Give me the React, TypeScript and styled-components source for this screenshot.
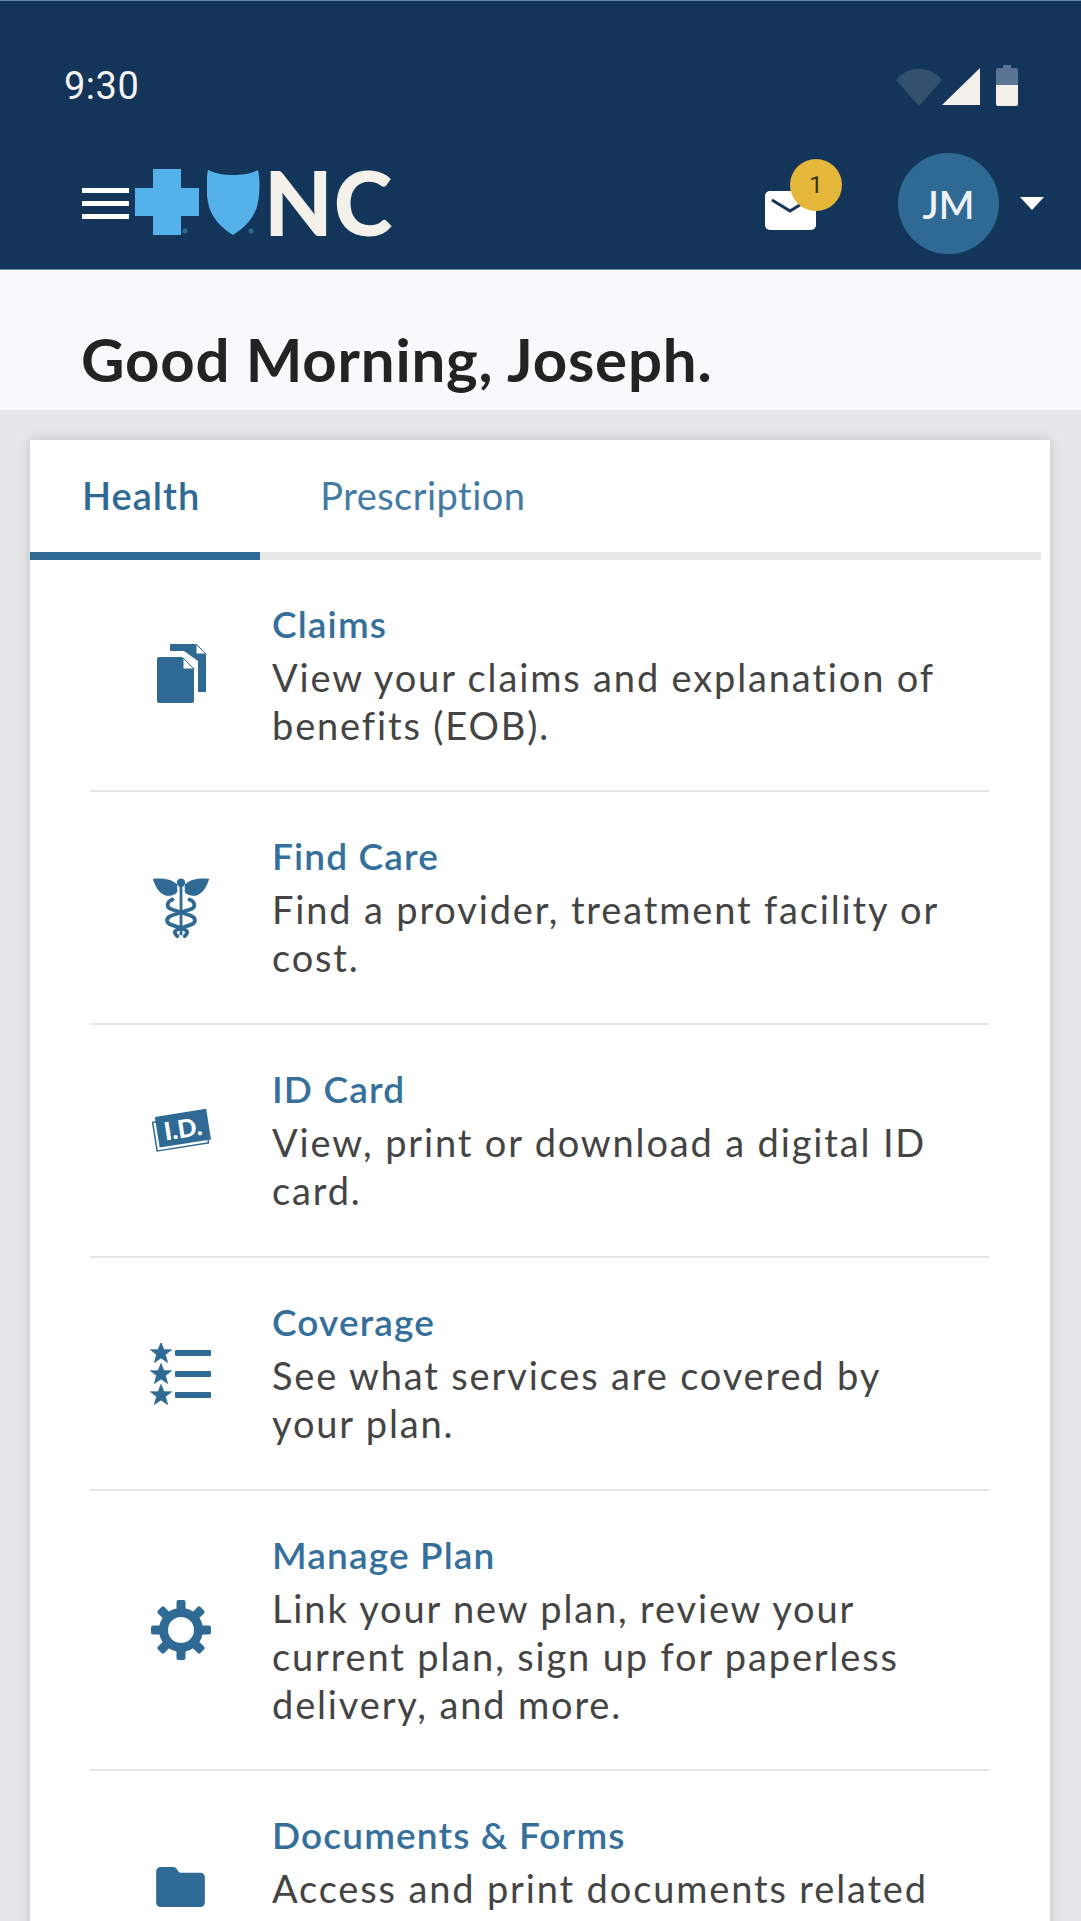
import styled, { createGlobalStyle } from "styled-components";

const GlobalStyle = createGlobalStyle`
  html, body {
    margin: 0;
    padding: 0;
    background: #e6e7e9;
  }
  * {
    box-sizing: border-box;
  }
`;

const Page = styled.div`
  width: 1081px;
  height: 1921px;
  overflow: hidden;
  display: flex;
  flex-direction: column;
  background: #e6e7e9;
  font-family: Lato, "Open Sans", sans-serif;
`;

const Header = styled.header`
  flex: none;
  height: 270px;
  display: flex;
  flex-direction: column;
  background: #14355a;
  border-top: 1px solid #5f87ab;
  border-bottom: 1px solid #6d8fae;
`;

const StatusBar = styled.div`
  height: 152px;
  flex: none;
  display: flex;
  justify-content: space-between;
  align-items: flex-start;
  padding: 64px 63px 0 64px;
`;

const Clock = styled.span`
  font-family: Roboto, sans-serif;
  font-size: 38px;
  line-height: 42px;
  color: #f5f3ef;
  letter-spacing: 0.5px;
`;

const StatusIcons = styled.div`
  display: flex;
  align-items: flex-start;
  margin-top: 3px;
`;

const NavBar = styled.nav`
  display: flex;
  align-items: center;
  height: 101px;
  padding: 0 37px 0 82px;
`;

const MenuButton = styled.button`
  width: 47px;
  height: 31px;
  margin-right: 6px;
  padding: 0;
  border: 0;
  background: transparent;
  display: flex;
  flex-direction: column;
  justify-content: space-between;
`;

const MenuBar = styled.span`
  display: block;
  height: 5px;
  background: #fff;
`;

const Logo = styled.div`
  display: flex;
  align-items: center;
  gap: 8px;
  margin-top: -3px;
`;

const LogoText = styled.span`
  margin-left: -4px;
  font-size: 89px;
  line-height: 66px;
  font-weight: 900;
  color: #f4f0ea;
  letter-spacing: 1px;
`;

const NavActions = styled.div`
  margin-left: auto;
  display: flex;
  align-items: center;
`;

const MailWrap = styled.div`
  position: relative;
  width: 51px;
  height: 39px;
  margin-right: 82px;
  margin-top: 13px;
`;

const Badge = styled.span`
  position: absolute;
  left: 25px;
  top: -32px;
  width: 52px;
  height: 52px;
  border-radius: 50%;
  background: #e5b73b;
  color: #3a3320;
  font-family: Roboto, sans-serif;
  font-size: 24px;
  display: flex;
  align-items: center;
  justify-content: center;
`;

const Avatar = styled.div`
  width: 101px;
  height: 101px;
  border-radius: 50%;
  background: #2f6a94;
  color: #eef2f5;
  font-size: 38px;
  font-weight: 600;
  display: flex;
  align-items: center;
  justify-content: center;
  margin-right: 21px;
`;

const Caret = styled.span`
  width: 0;
  height: 0;
  border-left: 12px solid transparent;
  border-right: 12px solid transparent;
  border-top: 13px solid #fff;
`;

const Greeting = styled.div`
  flex: none;
  height: 140px;
  padding: 54px 0 0 81px;
  background: #f8f9fb;
`;

const GreetingText = styled.h1`
  margin: 0;
  font-size: 60px;
  line-height: 70px;
  font-weight: 700;
  letter-spacing: 0.8px;
  color: #232323;
`;

const Main = styled.main`
  flex: 1;
  padding: 30px 31px 0 30px;
`;

const Card = styled.section`
  background: #fff;
  box-shadow: 0 0 12px rgba(0, 0, 0, 0.18);
  padding-bottom: 40px;
`;

const TabRail = styled.div`
  display: flex;
  height: 120px;
  margin-right: 9px;
  border-bottom: 8px solid #e9e9ea;
`;

const Tab = styled.div<{ $active?: boolean }>`
  height: 120px;
  padding: 32px ${(p) => (p.$active ? "60px" : "0")} 0 ${(p) => (p.$active ? "52px" : "60px")};
  font-size: 38px;
  line-height: 46px;
  letter-spacing: ${(p) => (p.$active ? "1px" : "0.45px")};
  color: ${(p) => (p.$active ? "#2f6a94" : "#447ba3")};
  font-weight: ${(p) => (p.$active ? 600 : 400)};
  border-bottom: 8px solid ${(p) => (p.$active ? "#2f6a94" : "transparent")};
`;

const List = styled.div`
  padding: 0 61px 0 60px;
`;

const Row = styled.div`
  display: flex;
  align-items: center;
  min-height: 233px;
  border-bottom: 2px solid #e6e6e7;

  &:first-child {
    min-height: 232px;
  }
`;

const IconCell = styled.div`
  flex: none;
  width: 182px;
  display: flex;
  justify-content: center;
  color: #2f6a94;
`;

const RowBody = styled.div`
  flex: 1;
  align-self: flex-start;
  padding: 34px 0 41px;
`;

const RowTitle = styled.div`
  font-size: 37px;
  line-height: 59px;
  font-weight: 600;
  letter-spacing: 1.15px;
  color: #34709b;
`;

const RowText = styled.div`
  font-size: 38px;
  line-height: 48px;
  letter-spacing: 1.85px;
  color: #444;
`;

function ClaimsIcon() {
  return (
    <svg width="60" height="70" viewBox="0 0 60 70">
      <path d="M19 4h25l11 11v37H47V21L33 11H19z" fill="#2f6a94" />
      <path d="M45 4v10h10z" fill="#fff" stroke="#2f6a94" strokeWidth="1" />
      <path d="M8 17h23l12 12v32a2 2 0 0 1-2 2H8a2 2 0 0 1-2-2V19a2 2 0 0 1 2-2z" fill="#2f6a94" />
      <path d="M32 18v11h11z" fill="#fff" stroke="#2f6a94" strokeWidth="1" />
    </svg>
  );
}

function CareIcon() {
  return (
    <svg width="60" height="60" viewBox="0 0 60 64">
      <g fill="#2f6a94">
        <path d="M0 1c9-1 20 0 26 6v8c-3 4-9 5-14 3C6 15 2 8 0 1z" />
        <path d="M60 1c-9-1-20 0-26 6v8c3 4 9 5 14 3 6-3 10-10 12-17z" />
        <rect x="28.5" y="3" width="3" height="58" />
        <circle cx="30" cy="5" r="4.5" />
      </g>
      <g fill="none" stroke="#2f6a94" strokeWidth="4" strokeLinecap="round">
        <path d="M21 23c-6 2-7 8-2 10l21 7c7 3 6 8 0 10l-14 5c-4 2-3 4 0 7" />
        <path d="M39 23c6 2 7 8 2 10L20 40c-7 3-6 8 0 10l14 5c4 2 3 4 0 7" />
      </g>
    </svg>
  );
}

function IdCardIcon() {
  return (
    <svg width="60" height="68" viewBox="0 0 60 68">
      <g transform="rotate(-9 30 22)">
        <rect x="3" y="11" width="52" height="29" fill="none" stroke="#2f6a94" strokeWidth="1.5" />
        <rect x="6" y="6" width="52" height="31" fill="#2f6a94" />
        <text x="32" y="31" textAnchor="middle" fontFamily="Lato, sans-serif" fontWeight="900" fontSize="25" fill="#fff">
          I.D.
        </text>
      </g>
    </svg>
  );
}

const starPoints = "0,-10.5 2.9,-3.2 10.5,-3.2 4.4,1.6 6.6,9.5 0,4.9 -6.6,9.5 -4.4,1.6 -10.5,-3.2 -2.9,-3.2";

function CoverageIcon() {
  return (
    <svg width="62" height="62" viewBox="0 0 62 62">
      {[10, 31, 52].map((y) => (
        <g key={y} fill="#2f6a94" stroke="#2f6a94" strokeWidth="0.8" strokeLinejoin="round">
          <polygon points={starPoints} transform={`translate(11 ${y})`} />
          <rect x="25" y={y - 3} width="36" height="6" rx="1" stroke="none" />
        </g>
      ))}
    </svg>
  );
}

function GearIcon() {
  return (
    <svg width="62" height="62" viewBox="-31 -31 62 62">
      <circle r="17.5" fill="none" stroke="#2f6a94" strokeWidth="9" />
      {[0, 45, 90, 135, 180, 225, 270, 315].map((a) => (
        <rect key={a} x="-4.5" y="-30" width="9" height="12" rx="2" fill="#2f6a94" transform={`rotate(${a})`} />
      ))}
    </svg>
  );
}

function FolderIcon() {
  return (
    <svg width="52" height="42" viewBox="0 0 52 44">
      <path
        d="M5 1h13c2 0 3 1 4 3s2 3 4 3h20c3 0 5 2 5 5v26c0 3-2 5-5 5H5c-3 0-5-2-5-5V6c0-3 2-5 5-5z"
        fill="#2f6a94"
      />
    </svg>
  );
}

const rows = [
  { title: "Claims", text: ["View your claims and explanation of", "benefits (EOB)."], icon: <ClaimsIcon /> },
  { title: "Find Care", text: ["Find a provider, treatment facility or", "cost."], icon: <CareIcon /> },
  { title: "ID Card", text: ["View, print or download a digital ID", "card."], icon: <IdCardIcon /> },
  { title: "Coverage", text: ["See what services are covered by", "your plan."], icon: <CoverageIcon /> },
  {
    title: "Manage Plan",
    text: ["Link your new plan, review your", "current plan, sign up for paperless", "delivery, and more."],
    icon: <GearIcon />,
  },
  { title: "Documents & Forms", text: ["Access and print documents related"], icon: <FolderIcon /> },
];

function App() {
  return (
    <Page>
      <GlobalStyle />
      <Header>
        <StatusBar>
          <Clock>9:30</Clock>
          <StatusIcons>
            <svg width="46" height="38" viewBox="0 0 46 38">
              <path d="M0 12C12-3 34-3 46 12L23 38z" fill="#33506f" />
            </svg>
            <svg width="38" height="37" viewBox="0 0 38 37">
              <path d="M38 0v37H0z" fill="#f4f0ea" />
            </svg>
            <svg width="22" height="41" viewBox="0 0 22 41" style={{ marginLeft: 16, marginTop: -3 }}>
              <path d="M7 0h8v3h5a2 2 0 0 1 2 2v15H0V5a2 2 0 0 1 2-2h5z" fill="#5a7493" />
              <path d="M0 20h22v19a2 2 0 0 1-2 2H2a2 2 0 0 1-2-2z" fill="#f4f0ea" />
            </svg>
          </StatusIcons>
        </StatusBar>
        <NavBar>
          <MenuButton aria-label="Menu">
            <MenuBar />
            <MenuBar />
            <MenuBar />
          </MenuButton>
          <Logo>
            <svg width="64" height="66" viewBox="0 0 64 66">
              <path d="M18 0h28v19h18v28H46v19H18V47H0V19h18z" fill="#55b1e9" />
              <circle cx="50" cy="62" r="2.5" fill="#2f6a94" />
            </svg>
            <svg width="53" height="66" viewBox="0 0 53 66">
              <path d="M1 1c8 4 17 5 25 5s18-1 25-5c2 10 2 22 0 32-2 14-13 26-25 33C14 59 3 47 1 33-1 23-1 11 1 1z" fill="#55b1e9" />
              <circle cx="44" cy="62" r="2.5" fill="#2f6a94" />
            </svg>
            <LogoText>NC</LogoText>
          </Logo>
          <NavActions>
            <MailWrap>
              <svg width="51" height="39" viewBox="0 0 51 39">
                <rect width="51" height="39" rx="5" fill="#fff" />
                <path d="M7 9l18 11 18-11" fill="none" stroke="#14355a" strokeWidth="3" />
              </svg>
              <Badge>1</Badge>
            </MailWrap>
            <Avatar>JM</Avatar>
            <Caret />
          </NavActions>
        </NavBar>
      </Header>
      <Greeting>
        <GreetingText>Good Morning, Joseph.</GreetingText>
      </Greeting>
      <Main>
        <Card>
          <TabRail>
            <Tab $active>Health</Tab>
            <Tab>Prescription</Tab>
          </TabRail>
          <List>
            {rows.map((row) => (
              <Row key={row.title}>
                <IconCell>{row.icon}</IconCell>
                <RowBody>
                  <RowTitle>{row.title}</RowTitle>
                  {row.text.map((line) => (
                    <RowText key={line}>{line}</RowText>
                  ))}
                </RowBody>
              </Row>
            ))}
          </List>
        </Card>
      </Main>
    </Page>
  );
}

export default App;
